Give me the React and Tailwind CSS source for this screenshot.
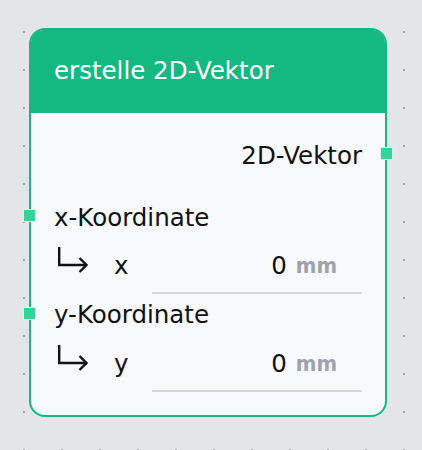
export default function App() {
  const Arrow = () => (
    <svg width="30" height="29" viewBox="0 0 30 29" className="shrink-0 self-start mt-[9px]">
      <path d="M1.2 0 V18 H28" fill="none" stroke="#111" strokeWidth="2.4" />
      <path d="M21.5 11 L28.5 18 L21.5 25" fill="none" stroke="#111" strokeWidth="2.4" />
    </svg>
  );
  const Handle = ({ side, top }) => (
    <div
      className={`absolute w-[13px] h-[13px] bg-[#34d399] border border-[#d1f5e6] ${side === "left" ? "left-[-8px]" : "right-[-8px]"}`}
      style={{ top }}
    />
  );
  const ValueRow = ({ label }) => (
    <div className="flex items-center h-[56px]">
      <div className="w-[4px]" />
      <Arrow />
      <div className="w-[26px]" />
      <div className="w-[38px] text-[24.5px] leading-none">{label}</div>
      <div className="flex-1 h-full flex items-center justify-end border-b-2 border-[#d4d6dc] pr-[25px] pt-[2px]">
        <span className="text-[24.5px] leading-none">0</span>
        <span
          className="ml-[9px] text-[22px] font-bold leading-none text-[#9ca3af]"
          style={{ fontFamily: '"DejaVu Sans Condensed", "DejaVu Sans", sans-serif' }}
        >
          mm
        </span>
      </div>
    </div>
  );
  return (
    <div
      className="w-[422px] h-[450px] bg-[#e4e5e9] pt-[28px] pl-[29px] bg-[radial-gradient(circle,#a3a4aa_1px,transparent_1.3px)] bg-[length:38px_38px] bg-[position:5px_13px]"
      style={{ fontFamily: '"DejaVu Sans", "Noto Sans", sans-serif' }}
    >
      <div className="relative w-[358px] h-[389px] rounded-[16px] border-2 border-[#14b982] bg-[#f8f9fb] text-[#111]">
        <div className="h-[83px] bg-[#14b982] rounded-t-[13px] flex items-center pl-[23px] text-white text-[24.5px]">
          erstelle 2D-Vektor
        </div>
        <div className="px-[23px] pt-[23px]">
          <div className="h-[40px] flex items-center justify-end text-[24.5px]">2D-Vektor</div>
          <div className="h-[22px]" />
          <div className="h-[40px] flex items-center text-[24.5px]">x-Koordinate</div>
          <ValueRow label="x" />
          <div className="h-[42px] flex items-center text-[24.5px]">y-Koordinate</div>
          <ValueRow label="y" />
        </div>
        <Handle side="right" top="117px" />
        <Handle side="left" top="179px" />
        <Handle side="left" top="277px" />
      </div>
    </div>
  );
}
